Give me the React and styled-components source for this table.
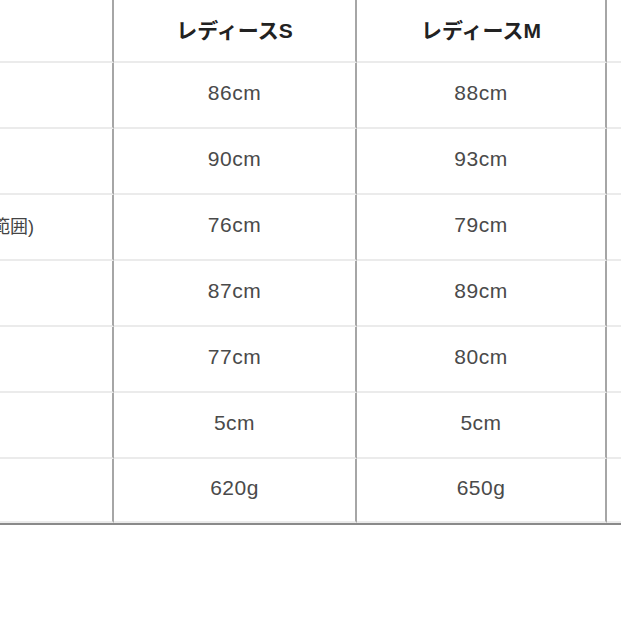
import React from "react";
import styled, { createGlobalStyle } from "styled-components";

const GlobalStyle = createGlobalStyle`
  html, body {
    margin: 0;
    padding: 0;
    background: #ffffff;
    overflow: hidden;
  }
  body {
    font-family: "Liberation Sans", Arial, "Noto Sans CJK JP", sans-serif;
  }
`;

// サイズ表 ---------
const sizes = ["レディースS", "レディースM", "レディースL"];

const rows = [
  { label: "着丈", values: ["86cm", "88cm", "90cm"] },
  { label: "身幅", values: ["90cm", "93cm", "96cm"] },
  { label: "ウエスト(調整範囲)", values: ["76cm", "79cm", "82cm"] },
  { label: "ヒップ", values: ["87cm", "89cm", "91cm"] },
  { label: "袖丈", values: ["77cm", "80cm", "83cm"] },
  { label: "裾リブ", values: ["5cm", "5cm", "5cm"] },
  { label: "重量", values: ["620g", "650g", "680g"] },
];

const colWidths = [260, 243, 250, 250];

function App() {
  return (
    <>
      <GlobalStyle />
      <Page>
        <SizeTable>
          <colgroup>
            {colWidths.map((w, i) => (
              <Col key={i} $w={w} />
            ))}
          </colgroup>
          <thead>
            <tr>
              <HeadCell />
              {sizes.map((s) => (
                <HeadCell key={s}>{s}</HeadCell>
              ))}
            </tr>
          </thead>
          <tbody>
            {rows.map((r, i) => (
              <BodyRow key={r.label} $last={i === rows.length - 1}>
                <LabelCell>{r.label}</LabelCell>
                {r.values.map((v, j) => (
                  <ValueCell key={j}>{v}</ValueCell>
                ))}
              </BodyRow>
            ))}
          </tbody>
        </SizeTable>
      </Page>
    </>
  );
}

const Page = styled.div`
  width: 621px;
  height: 621px;
  overflow: hidden;
  background: #ffffff;
`;

const SizeTable = styled.table`
  margin-left: -146px;
  border-collapse: separate;
  border-spacing: 0;
  table-layout: fixed;
  width: 1003px;
  border-bottom: 2px solid #8a8a8a;
`;

const Col = styled.col`
  width: ${(p) => p.$w}px;
`;

const HeadCell = styled.th`
  height: 57px;
  padding: 0 0 4px 0;
  text-align: center;
  vertical-align: middle;
  font-size: 21px;
  font-weight: bold;
  color: #222222;
  white-space: nowrap;
  border-bottom: 2px solid #ebebeb;
  border-right: 2px solid #a6a6a6;
`;

const BodyRow = styled.tr`
  td {
    height: ${(p) => (p.$last ? "58px" : "60px")};
  }
`;

const LabelCell = styled.td`
  padding: 0 0 4px 24px;
  text-align: left;
  vertical-align: middle;
  font-size: 18px;
  color: #444444;
  white-space: nowrap;
  border-bottom: 2px solid #ebebeb;
  border-right: 2px solid #a6a6a6;
`;

const ValueCell = styled.td`
  padding: 0 0 4px 0;
  text-align: center;
  vertical-align: middle;
  font-size: 21px;
  letter-spacing: 0.5px;
  color: #4a4a4a;
  white-space: nowrap;
  border-bottom: 2px solid #ebebeb;
  border-right: 2px solid #a6a6a6;
`;

export default App;
